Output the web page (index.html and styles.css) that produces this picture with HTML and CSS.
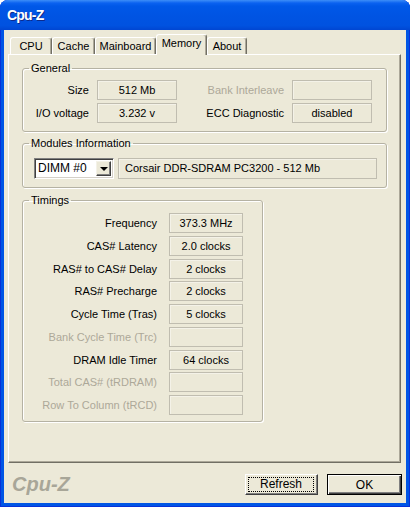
FILE: index.html
```html
<!DOCTYPE html>
<html lang="en">
<head>
    <meta charset="UTF-8">
    <title>Cpu-Z</title>
    <link rel="stylesheet" href="styles.css">
</head>
<body>
    <div class="window">
        <div class="titlebar"><span class="title">Cpu-Z</span></div>
        <div class="client">
            <!-- Tab strip -->
            <div class="tabs">
                <div class="tab tab-cpu">CPU</div>
                <div class="tab tab-cache">Cache</div>
                <div class="tab tab-mainboard">Mainboard</div>
                <div class="tab tab-memory active">Memory</div>
                <div class="tab tab-about">About</div>
            </div>

            <div class="panel">
                <!-- General -->
                <fieldset class="group group-general">
                    <legend>General</legend>
                    <div class="general-grid">
                        <span class="lbl">Size</span>
                        <span class="field">512 Mb</span>
                        <span class="lbl disabled">Bank Interleave</span>
                        <span class="field"></span>
                        <span class="lbl">I/O voltage</span>
                        <span class="field">3.232 v</span>
                        <span class="lbl">ECC Diagnostic</span>
                        <span class="field">disabled</span>
                    </div>
                </fieldset>

                <!-- Modules Information -->
                <fieldset class="group group-modules">
                    <legend>Modules Information</legend>
                    <div class="modules-row">
                        <div class="combo">
                            <span class="combo-text">DIMM #0</span>
                            <span class="combo-btn"><span class="arrow"></span></span>
                        </div>
                        <span class="field field-left">Corsair DDR-SDRAM PC3200 - 512 Mb</span>
                    </div>
                </fieldset>

                <!-- Timings -->
                <fieldset class="group group-timings">
                    <legend>Timings</legend>
                    <div class="timings-grid">
                        <span class="lbl">Frequency</span>
                        <span class="field">373.3 MHz</span>
                        <span class="lbl">CAS# Latency</span>
                        <span class="field">2.0 clocks</span>
                        <span class="lbl">RAS# to CAS# Delay</span>
                        <span class="field">2 clocks</span>
                        <span class="lbl">RAS# Precharge</span>
                        <span class="field">2 clocks</span>
                        <span class="lbl">Cycle Time (Tras)</span>
                        <span class="field">5 clocks</span>
                        <span class="lbl disabled">Bank Cycle Time (Trc)</span>
                        <span class="field"></span>
                        <span class="lbl">DRAM Idle Timer</span>
                        <span class="field">64 clocks</span>
                        <span class="lbl disabled">Total CAS# (tRDRAM)</span>
                        <span class="field"></span>
                        <span class="lbl disabled">Row To Column (tRCD)</span>
                        <span class="field"></span>
                    </div>
                </fieldset>
            </div>

            <div class="footer">
                <span class="logo">Cpu-Z</span>
                <button class="btn btn-refresh"><span class="focus">Refresh</span></button>
                <button class="btn btn-ok">OK</button>
            </div>
        </div>
    </div>
</body>
</html>
```
FILE: styles.css
```css
body {
    margin: 0;
    background-color: #fff;
    font-family: "Liberation Sans", Arial, sans-serif;
    font-size: 11px;
    color: #000;
}
.window {
    width: 410px;
    height: 507px;
    background-color: #0055e5;
    border-radius: 8px 8px 0 0;
    display: flex;
    flex-direction: column;
    box-shadow: inset 1px 0 #0831d9, inset -1px 0 #0831d9, inset 0 -1px #0831d9;
}
.titlebar {
    height: 30px;
    flex: none;
    border-radius: 8px 8px 0 0;
    background: linear-gradient(#3d8ef8 0, #0b62f0 3px, #0058e8 6px, #0054e3 50%, #0052e0 85%, #0046d2 100%);
    display: flex;
    align-items: center;
    padding-left: 7px;
}
.title {
    color: #fff;
    font-family: "Liberation Sans", Arial, sans-serif;
    font-weight: bold;
    font-size: 14px;
    letter-spacing: -0.8px;
    text-shadow: 1px 1px #0c2b8e;
}
.client {
    flex: 1;
    margin: 0 4px 4px;
    background-color: #ece9d8;
    display: flex;
    flex-direction: column;
}

/* tabs */
.tabs {
    height: 24px;
    display: flex;
    align-items: flex-end;
    padding-left: 6px;
    box-sizing: border-box;
}
.tab {
    height: 17px;
    box-sizing: border-box;
    border-top: 1px solid #fff;
    border-left: 1px solid #fff;
    border-right: 1px solid #716f64;
    box-shadow: inset -1px 0 #aca899;
    border-radius: 3px 3px 0 0;
    text-align: center;
    line-height: 16px;
}
.tab.active {
    height: 21px;
    margin-bottom: -1px;
    position: relative;
    z-index: 1;
    background-color: #ece9d8;
    line-height: 17px;
}
.tab-cpu { width: 42px; }
.tab-cache { width: 43px; }
.tab-mainboard { width: 61px; }
.tab-memory { width: 51px; }
.tab-about { width: 40px; }

.panel {
    margin: 0 5px 0 4px;
    height: 409px;
    box-sizing: border-box;
    border: 1px solid;
    border-color: #fff #716f64 #716f64 #fff;
    box-shadow: inset -1px -1px #aca899;
}

/* group boxes */
.group {
    margin: 7px 13px 0;
    padding: 0;
    border: 1px solid #b5b2a3;
    border-radius: 3px;
    box-shadow: inset 1px 1px #fff, 1px 1px #fff;
    min-width: 0;
}
.group legend {
    margin-left: 6px;
    padding: 0 2px;
    line-height: 13px;
}
.group-modules {
    margin-top: 5px;
}
.group-timings {
    margin-top: 6px;
    width: 241px;
    box-sizing: border-box;
}

.lbl {
    text-align: right;
    padding-right: 8px;
    line-height: 20px;
    white-space: nowrap;
}
.disabled {
    color: #aca899;
}
.field {
    height: 20px;
    box-sizing: border-box;
    border: 1px solid #c0bdb0;
    box-shadow: inset 1px 1px #f4f2e8;
    line-height: 18px;
    text-align: center;
    white-space: nowrap;
}
.field-left {
    flex: 1;
    height: 21px;
    line-height: 19px;
    text-align: left;
    padding-left: 6px;
}

.general-grid {
    display: grid;
    grid-template-columns: 74px 80px 115px 80px;
    row-gap: 3px;
    padding: 5px 0 8px;
}

.modules-row {
    display: flex;
    gap: 4px;
    padding: 8px 9px 8px 11px;
}
.combo {
    width: 80px;
    height: 21px;
    box-sizing: border-box;
    display: flex;
    background-color: #fff;
    border: 1px solid;
    border-color: #808080 #fff #fff #808080;
    box-shadow: inset 1px 1px #404040, inset -1px -1px #d4d0c8;
    padding: 2px;
}
.combo-text {
    flex: 1;
    font-size: 12px;
    line-height: 15px;
    padding-left: 1px;
}
.combo-btn {
    width: 15px;
    box-sizing: border-box;
    background-color: #ece9d8;
    border: 1px solid;
    border-color: #f4f2e8 #404040 #404040 #f4f2e8;
    box-shadow: inset -1px -1px #808080;
    display: flex;
    align-items: center;
    justify-content: center;
}
.arrow {
    width: 0;
    height: 0;
    border-left: 4px solid transparent;
    border-right: 4px solid transparent;
    border-top: 4px solid #000;
}

.timings-grid {
    display: grid;
    grid-template-columns: 134px 74px;
    column-gap: 12px;
    row-gap: 2.75px;
    padding: 6px 0 6px;
}
.timings-grid .lbl {
    padding-right: 0;
}

/* footer */
.footer {
    display: flex;
    align-items: center;
    gap: 9px;
    padding: 11px 4px 0 8px;
}
.logo {
    margin-right: auto;
    font-family: "Liberation Sans", Arial, sans-serif;
    font-size: 20px;
    font-weight: bold;
    font-style: italic;
    color: #a8a698;
    line-height: 21px;
}
.btn {
    width: 73px;
    height: 21px;
    padding: 0;
    box-sizing: border-box;
    font-family: "Liberation Sans", Arial, sans-serif;
    font-size: 12px;
    color: #000;
    background-color: #ece9d8;
    border: 1px solid;
    border-color: #fff #404040 #404040 #fff;
    box-shadow: inset -1px -1px #808080;
}
.btn .focus {
    display: block;
    margin: 0 3px 1px 2px;
    border: 1px dotted #000;
    line-height: 13px;
}
.btn-ok {
    width: 75px;
    border-color: #000;
    box-shadow: inset 1px 1px #fff, inset -1px -1px #404040, inset -2px -2px #808080;
}
```
